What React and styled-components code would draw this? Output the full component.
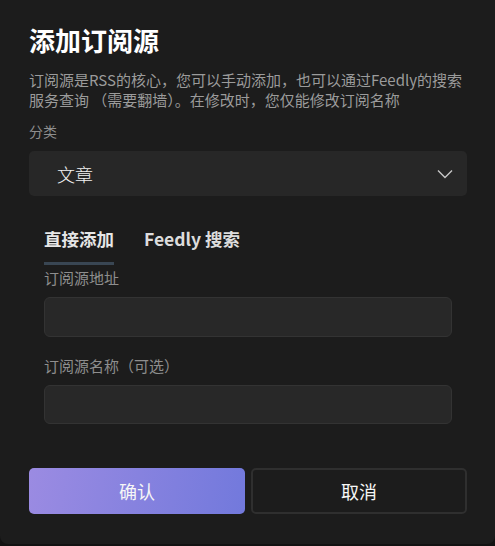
import styled, { createGlobalStyle } from "styled-components";

const Global = createGlobalStyle`
   html, body {
      margin: 0;
      padding: 0;
      background: #121212;
   }
   * { box-sizing: border-box; }
`;

// dialog
const Dialog = styled.div`
   width: 495px;
   height: 544px;
   background: #1c1c1c;
   border-radius: 0 0 8px 8px;
   padding: 22px 28px 0 29px;
   display: flex;
   flex-direction: column;
   font-family: "Noto Sans CJK SC", "Noto Sans", sans-serif;
   color: #fff;
`;

const Title = styled.h2`
   margin: 0;
   font-size: 26px;
   line-height: 36px;
   font-weight: 700;
   color: #ffffff;
`;

const Desc = styled.p`
   margin: 12px 0 0 0;
   font-size: 15px;
   line-height: 20px;
   color: #9b9b9b;
   white-space: nowrap;
`;

const Label = styled.div`
   margin-top: ${(p) => p.$top}px;
   font-size: ${(p) => p.$size || 14}px;
   line-height: 20px;
   color: #8e8e8e;
   white-space: nowrap;
`;

// select
const Select = styled.div`
   margin-top: 10px;
   height: 45px;
   background: #272727;
   border-radius: 5px;
   display: flex;
   align-items: center;
   justify-content: space-between;
   padding: 0 14px 0 28px;
   font-size: 18px;
   font-weight: 300;
   color: #f2f2f2;
`;

// tabs + form
const Panel = styled.div`
   margin-top: 31px;
   padding: 0 15px;
   display: flex;
   flex-direction: column;
`;

const Tabs = styled.div`
   display: flex;
   gap: 30px;
`;

const Tab = styled.div`
   font-size: 17.5px;
   line-height: 24px;
   font-weight: 700;
   color: ${(p) => (p.$active ? "#e6e6e6" : "#dcdcdc")};
   padding-bottom: 11px;
   border-bottom: 3px solid ${(p) => (p.$active ? "#394653" : "transparent")};
`;

const Input = styled.input`
   margin-top: 9px;
   height: ${(p) => p.$h}px;
   width: 100%;
   background: #282828;
   border: 1px solid #333333;
   border-radius: 6px;
   outline: none;
   color: #eee;
   font-family: inherit;
   font-size: 15px;
   padding: 0 12px;
`;

// buttons
const Actions = styled.div`
   margin-top: 44px;
   display: grid;
   grid-template-columns: 1fr 1fr;
   gap: 6px;
`;

const Button = styled.button`
   height: 46px;
   border-radius: 5px;
   font-family: inherit;
   font-size: 18px;
   font-weight: 400;
   color: #f6f6f6;
   border: ${(p) => (p.$primary ? "none" : "2px solid #2f2f2f")};
   background: ${(p) =>
      p.$primary ? "linear-gradient(100deg, #9b8be2 0%, #7279dc 100%)" : "#1c1c1c"};
`;

function Chevron() {
   return (
      <svg width="16" height="10" viewBox="0 0 16 10">
         <polyline points="1,1.5 8,8.5 15,1.5" fill="none" stroke="#c6c6c6" strokeWidth="1.4" />
      </svg>
   );
}

export default function App() {
   return (
      <>
         <Global />
         <Dialog>
            <Title>添加订阅源</Title>
            <Desc>
               订阅源是RSS的核心，您可以手动添加，也可以通过Feedly的搜索
               <br />
               服务查询 （需要翻墙）。在修改时，您仅能修改订阅名称
            </Desc>
            <Label $top={11}>分类</Label>
            <Select>
               <span>文章</span>
               <Chevron />
            </Select>
            <Panel>
               <Tabs>
                  <Tab $active>直接添加</Tab>
                  <Tab>Feedly 搜索</Tab>
               </Tabs>
               <Label $top={3} $size={15}>订阅源地址</Label>
               <Input $h={40} />
               <Label $top={19} $size={15}>订阅源名称（可选）</Label>
               <Input $h={39} />
            </Panel>
            <Actions>
               <Button $primary>确认</Button>
               <Button>取消</Button>
            </Actions>
         </Dialog>
      </>
   );
}
